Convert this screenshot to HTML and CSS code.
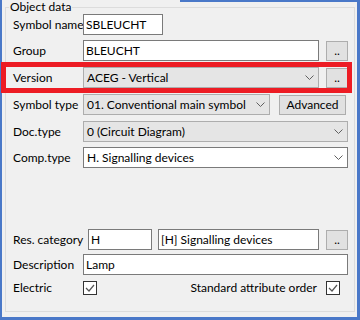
FILE: index.html
```html
<!DOCTYPE html>
<html lang="en">
<head>
    <meta charset="UTF-8">
    <title>Object data</title>
    <link rel="stylesheet" href="styles.css">
</head>
<body>
    <div class="frame">
        <fieldset class="group">
            <legend>Object data</legend>

            <div class="row row-first">
                <label>Symbol name</label>
                <div class="input name-input">SBLEUCHT</div>
            </div>

            <div class="row row-group">
                <label>Group</label>
                <div class="input grow">BLEUCHT</div>
                <button class="btn dots">..</button>
            </div>

            <div class="row row-mid">
                <label>Version</label>
                <div class="combo grow">
                    <span>ACEG - Vertical</span>
                    <svg class="chev" width="9" height="5" viewBox="0 0 9 5"><path d="M0.5 0.5 L4.5 4.5 L8.5 0.5" /></svg>
                </div>
                <button class="btn dots">..</button>
            </div>

            <div class="row row-mid">
                <label>Symbol type</label>
                <div class="combo type-combo">
                    <span>01. Conventional main symbol</span>
                    <svg class="chev" width="9" height="5" viewBox="0 0 9 5"><path d="M0.5 0.5 L4.5 4.5 L8.5 0.5" /></svg>
                </div>
                <button class="btn advanced">Advanced</button>
            </div>

            <div class="row row-mid">
                <label>Doc.type</label>
                <div class="combo grow">
                    <span>0 (Circuit Diagram)</span>
                    <svg class="chev" width="9" height="5" viewBox="0 0 9 5"><path d="M0.5 0.5 L4.5 4.5 L8.5 0.5" /></svg>
                </div>
            </div>

            <div class="row row-comp">
                <label>Comp.type</label>
                <div class="combo combo-white grow">
                    <span>H. Signalling devices</span>
                    <svg class="chev" width="9" height="5" viewBox="0 0 9 5"><path d="M0.5 0.5 L4.5 4.5 L8.5 0.5" /></svg>
                </div>
            </div>

            <div class="row row-res">
                <label class="label-wide">Res. category</label>
                <div class="input res-input">H</div>
                <div class="input grow">[H] Signalling devices</div>
                <button class="btn dots">..</button>
            </div>

            <div class="row row-tight">
                <label>Description</label>
                <div class="input grow">Lamp</div>
            </div>

            <div class="row row-check">
                <label>Electric</label>
                <span class="check"><svg width="12" height="12" viewBox="0 0 12 12"><path d="M2 6 L5 9 L10 3" /></svg></span>
                <span class="std-label">Standard attribute order</span>
                <span class="check check-last"><svg width="12" height="12" viewBox="0 0 12 12"><path d="M2 6 L5 9 L10 3" /></svg></span>
            </div>
        </fieldset>

        <div class="highlight"></div>
    </div>
</body>
</html>
```

FILE: styles.css
```css
* { box-sizing: border-box; }
body { margin: 0; font-family: Lato, "Noto Sans", sans-serif; font-size: 12px; color: #000; }

.frame { position: relative; width: 360px; height: 320px; background: #f0f0f0; border-left: 2px solid #4a78c8; border-right: 3px solid #4a78c8; border-bottom: 3px solid #4a78c8; padding-left: 3px; }
.frame::before { content: ""; position: absolute; top: 0; left: 178px; right: -3px; height: 2px; background: #4a78c8; }

.group { margin: 0; width: 350px; height: 312px; border: 1px solid #dcdcdc; padding: 0 6px 0 7px; }
.group legend { margin-left: -4px; padding: 0 1px; line-height: 14px; }

.row { display: flex; align-items: center; height: 21px; gap: 6px; }
.row label { width: 64px; flex: none; white-space: nowrap; }
.row .label-wide { width: 69px; }
.row-first { margin-top: 0; }
.row-group { margin-top: 5px; }
.row-mid { margin-top: 6px; }
.row-comp { margin-top: 5px; }
.row-res { margin-top: 61px; }
.row-tight { margin-top: 3px; height: 22px; }
.row-check { margin-top: 2px; }

.grow { flex: 1; min-width: 0; }

.input { height: 21px; border: 1px solid #7a7a7a; background: #fff; padding: 0 2px; line-height: 19px; white-space: nowrap; }
.name-input { width: 80px; }
.res-input { width: 64px; }

.combo { height: 21px; display: flex; align-items: center; justify-content: space-between; border: 1px solid #adadad; background: #e5e5e5; padding: 0 4px 0 3px; white-space: nowrap; }
.combo-white { background: #fff; border-color: #7a7a7a; }
.type-combo { width: 187px; flex: none; margin-right: 3px; }
.chev { flex: none; }
.chev path { fill: none; stroke: #606060; stroke-width: 1; }

.btn { height: 20px; border: 1px solid #adadad; background: #e1e1e1; font: inherit; color: #000; padding: 0; }
.dots { width: 22px; margin-left: 1px; line-height: 14px; }
.advanced { width: 67px; line-height: 18px; }

.check { width: 14px; height: 14px; border: 1px solid #333; background: #fff; display: flex; align-items: center; justify-content: center; flex: none; }
.check path { fill: none; stroke: #555; stroke-width: 1.2; }
.std-label { margin-left: auto; margin-right: 3px; }
.check-last { margin-right: 8px; }

.highlight { position: absolute; left: -1px; top: 62px; width: 351px; height: 31px; border: 5px solid #ed1c24; }
```
